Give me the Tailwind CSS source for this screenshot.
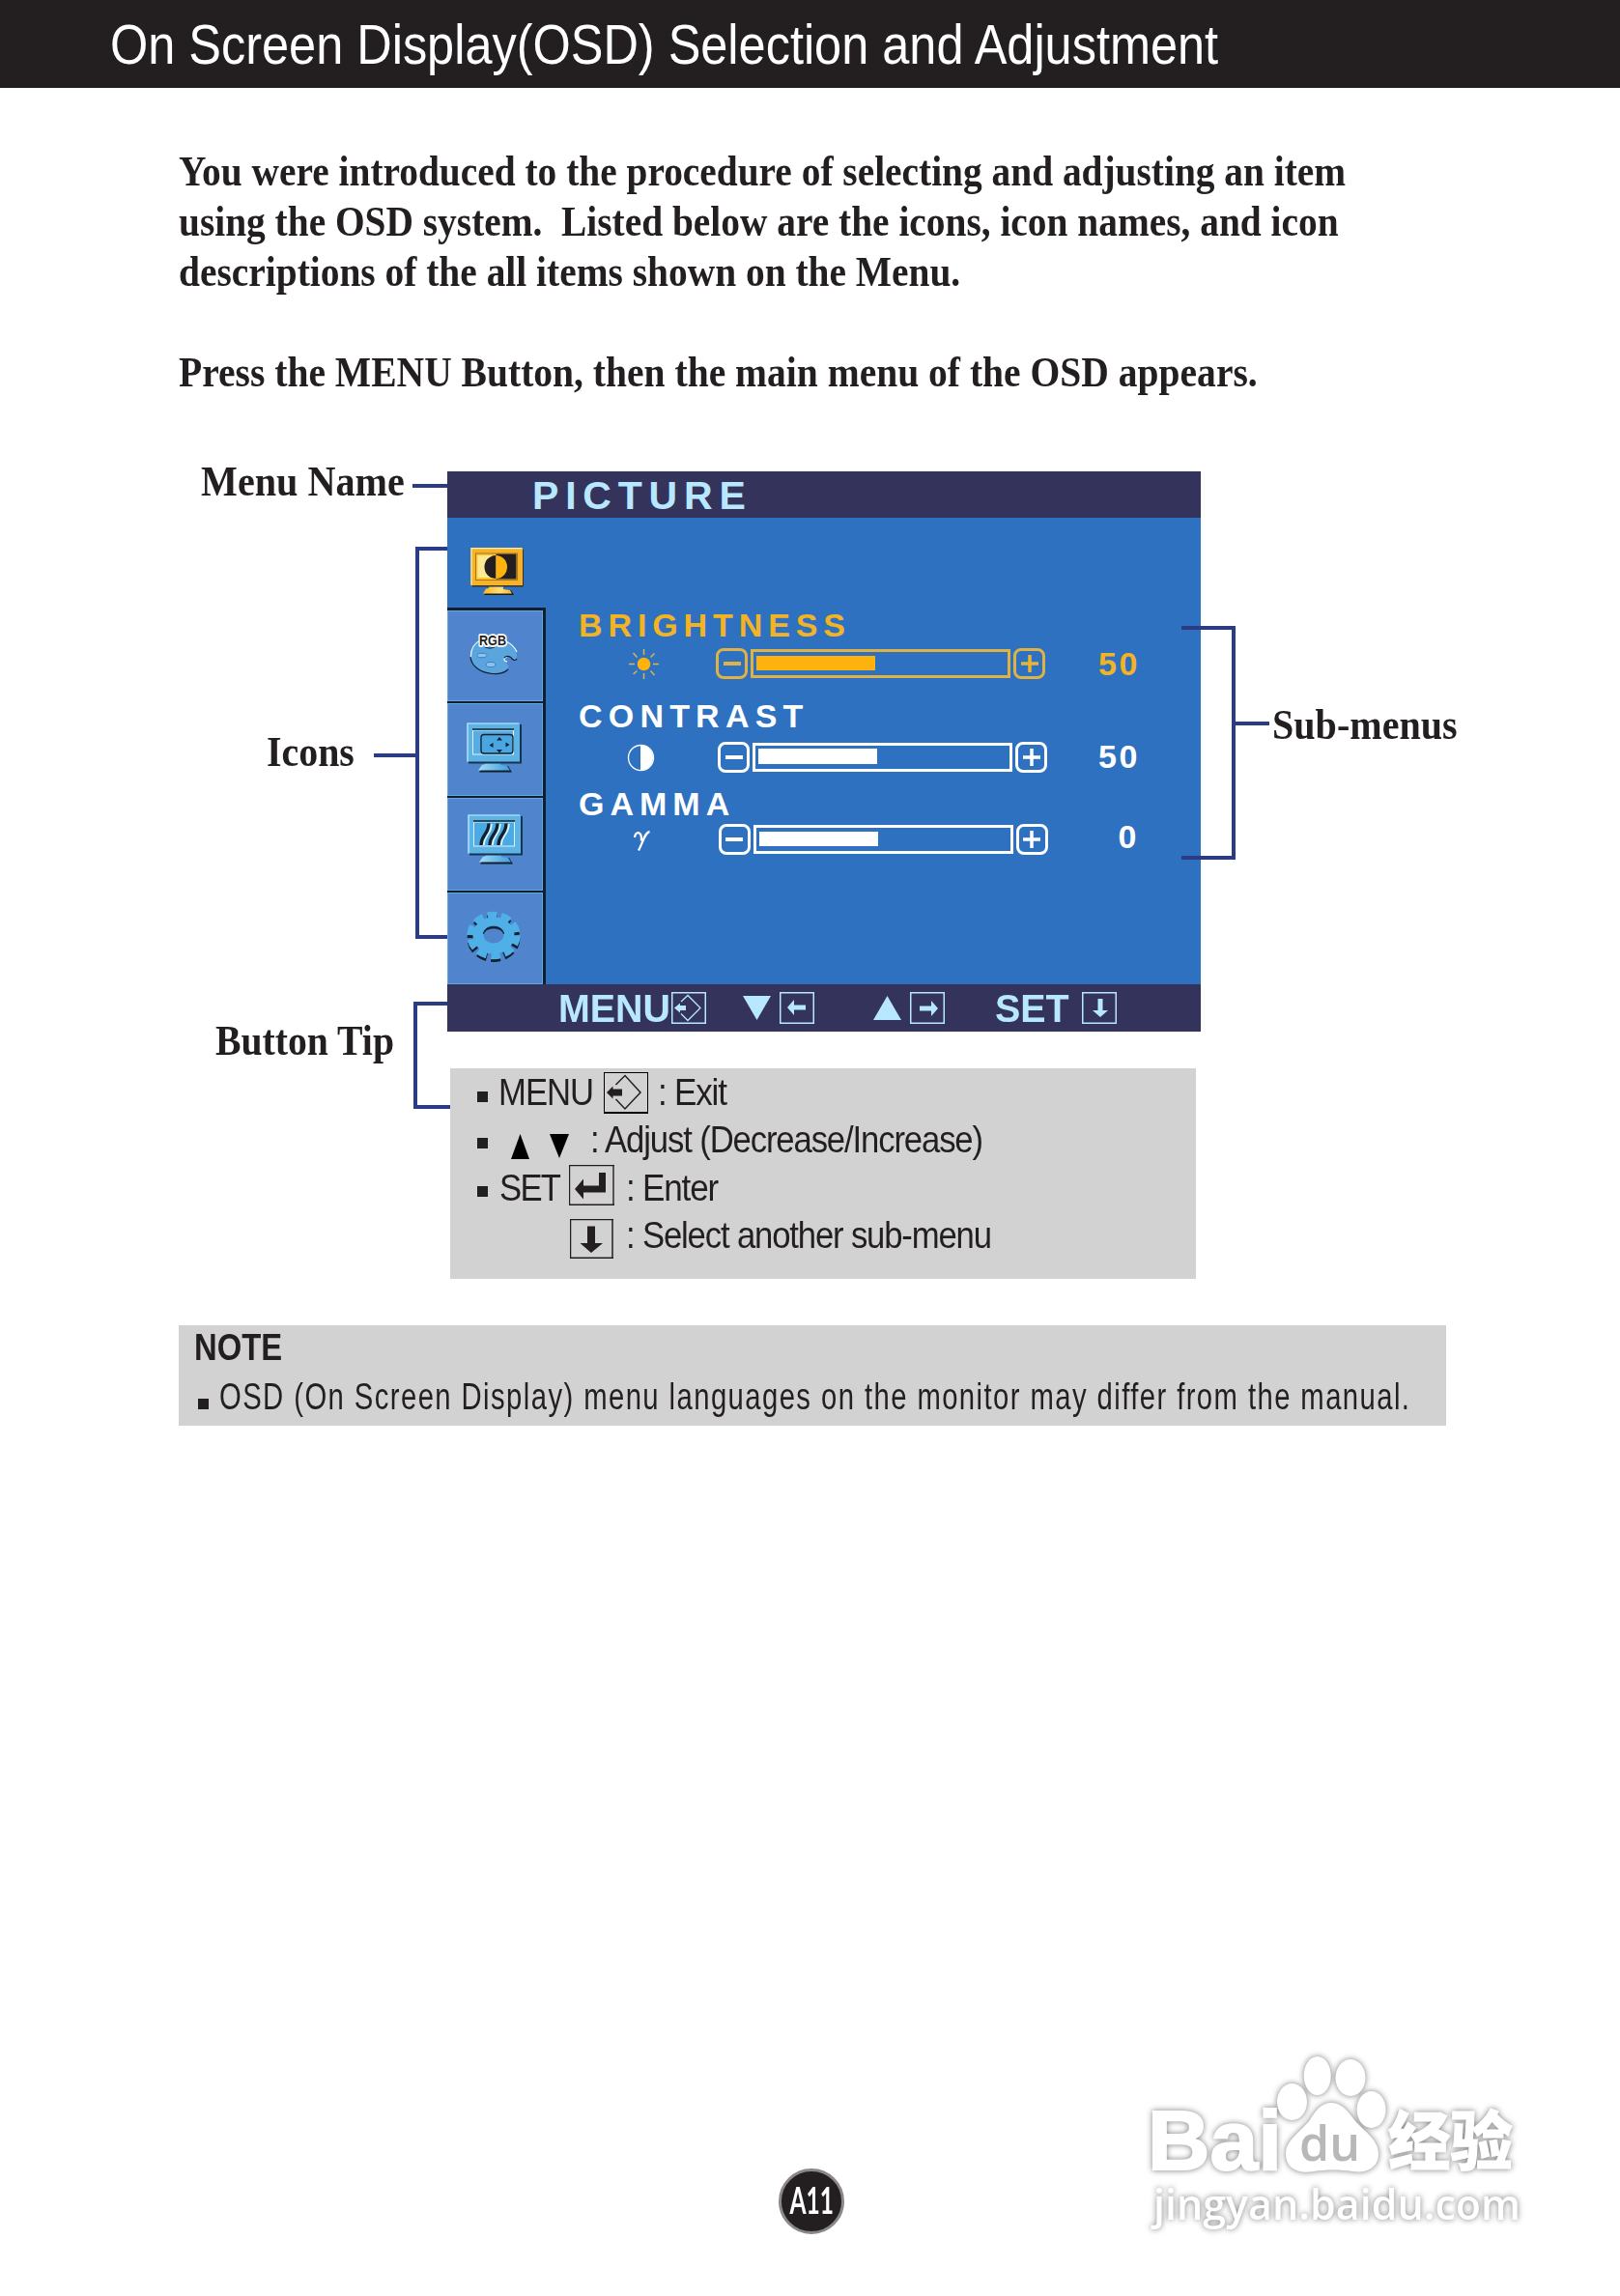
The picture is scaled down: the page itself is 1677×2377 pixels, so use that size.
<!DOCTYPE html>
<html lang="en">

<head>
    <meta charset="UTF-8">
    <meta name="viewport" content="width=device-width, initial-scale=1.0">
    <title>On Screen Display (OSD) Selection and Adjustment</title>
    <script src="https://cdn.jsdelivr.net/npm/@tailwindcss/browser@4"></script>
</head>

<body class="bg-white text-[#231f20] font-['Liberation_Sans',sans-serif]">
    <div class="relative w-[1677px] h-[2377px] overflow-hidden">

        <header class="flex items-center h-[91px] pl-[114px] bg-[#231f20] text-white">
            <h1 class="text-[58px] leading-none whitespace-nowrap origin-left scale-x-[0.87]">On Screen Display(OSD) Selection and Adjustment</h1>
        </header>

        <main class="px-[185px]">
            <!-- Intro -->
            <div class="pt-[60px] font-['Liberation_Serif',serif] font-bold text-[45px] leading-[52px]">
                <p class="whitespace-pre origin-left scale-x-[0.8752]">You were introduced to the procedure of selecting and adjusting an item</p>
                <p class="whitespace-pre origin-left scale-x-[0.8752]">using the OSD system.  Listed below are the icons, icon names, and icon</p>
                <p class="whitespace-pre origin-left scale-x-[0.876]">descriptions of the all items shown on the Menu.</p>
                <p class="mt-[52px] whitespace-pre origin-left scale-x-[0.879]">Press the MENU Button, then the main menu of the OSD appears.</p>
            </div>

            <!-- Annotated OSD menu -->
            <section class="relative flex mt-[64px] h-[849px]">
                <div class="w-[278px] shrink-0 pt-px flex flex-col items-start font-['Liberation_Serif',serif] font-bold text-[45px] leading-none whitespace-nowrap">
                    <p class="ml-[23px] origin-left scale-x-[0.893]">Menu Name</p>
                    <p class="mt-[235px] ml-[91px] origin-left scale-x-[0.886]">Icons</p>
                    <p class="mt-[254px] ml-[38px] origin-left scale-x-[0.882]">Button Tip</p>
                </div>

                <div class="w-[780px] shrink-0 pt-[13px]">
                    <div class="flex items-center h-[48px] pl-[88px] pt-[2px] bg-[#33335b] text-[#b8e8ff]">
                        <span class="text-[41px] font-bold leading-none tracking-[6.8px]">PICTURE</span>
                    </div>

                    <div class="flex h-[483px] bg-[#2d71c0]">
                        <!-- Icon column -->
                        <div class="w-[102px] shrink-0">
                            <div class="h-[93px] pt-[30px] pl-[23px]">
                                <svg class="w-[58px] h-[52px]" viewBox="0 0 58 52">
                                    <defs>
                                        <linearGradient id="stand" x1="0" x2="1">
                                            <stop offset="0" stop-color="#f9b522" />
                                            <stop offset="0.6" stop-color="#fde07c" />
                                            <stop offset="1" stop-color="#f9b522" />
                                        </linearGradient>
                                        <linearGradient id="standBlue" x1="0" x2="1">
                                            <stop offset="0" stop-color="#a5dbf5" />
                                            <stop offset="1" stop-color="#3f9fdc" />
                                        </linearGradient>
                                    </defs>
                                    <path d="M15 50 L19 45 H43 L46 50 Z" fill="#1d1a12" />
                                    <path d="M20 41 H35 V44 L42 45 L44 48.500 H14 L17 43.500 L20 43 Z" fill="url(#stand)" />
                                    <rect x="3" y="3" width="53" height="38.500" fill="#3a3226" />
                                    <rect x="1.500" y="1" width="53.500" height="39" fill="#f4b32a" />
                                    <path d="M2 39.500 V1.700 H54" fill="none" stroke="#ffeaa0" stroke-width="1.300" />
                                    <rect x="6.500" y="7" width="43" height="27.500" fill="#ffc629" stroke="#a87518" />
                                    <rect x="8.500" y="9" width="19" height="23" fill="#fde993" />
                                    <rect x="27.500" y="7.500" width="21" height="26" fill="#231f20" />
                                    <path d="M27 9 A11.500 12 0 0 0 27 33 Z" fill="#231f20" />
                                    <path d="M27.500 9 A11.500 12 0 0 1 27.500 33 Z" fill="#fdb20e" />
                                </svg>
                            </div>
                            <div class="border-r-[3px] border-[#10202e]">
                                <div class="h-[97px] border-t-[3px] border-[#10202e]">
                                    <div class="h-full border border-[#68a6dc] bg-[#5085cd] pt-[21px] pl-[20px]">
                                        <svg class="w-[54px] h-[46px]" viewBox="0 0 54 46">
                                            <path d="M26 8 C40 7 51 14 51 25 C51 29 47 31 46 28 C44 25 39 26 37 29 C37 32 43 32 42 37 C39 42 32 43.500 26 43 C13 43 3 35 3 25 C3 15 12 8 26 8 Z" fill="#5aa5de" />
                                            <path d="M3.500 27 C3 18 7 12 13 9 M40 10 C46 13 49 16 51 21 M41 31 C36 30 38 27 41 26" fill="none" stroke="#e4f4ff" stroke-width="1.300" />
                                            <path d="M3 26 C4 36 14 43 26 43.500 C33 44 39 42 42 39 M38 27 C41 24 45 26 46 28 C48 30 50 30 51 28" fill="none" stroke="#10202e" stroke-width="1.200" />
                                            <ellipse cx="15" cy="24.500" rx="5" ry="2.200" fill="#8cc4ee" stroke="#356fb5" stroke-width="0.800" />
                                            <ellipse cx="24" cy="34" rx="5" ry="2.500" fill="#8cc4ee" stroke="#356fb5" stroke-width="0.800" />
                                            <path d="M18 16 Q23 18.500 28 16" fill="none" stroke="#10202e" />
                                            <text x="12" y="13.500" textLength="28" lengthAdjust="spacingAndGlyphs" font-family="Liberation Sans" font-weight="bold" font-size="15" fill="#231f20" stroke="#fff" stroke-width="3.500" stroke-linejoin="round" paint-order="stroke">RGB</text>
                                        </svg>
                                    </div>
                                </div>
                                <div class="h-[98px] border-t-2 border-[#10202e]">
                                    <div class="h-full border border-[#68a6dc] bg-[#5085cd] pt-[18px] pl-[18px]">
                                        <svg class="w-[60px] h-[54px]" viewBox="0 0 60 54">
                                            <path d="M14 52.500 L18 46 H44 L48 52.500 Z" fill="#10202e" />
                                            <path d="M20 42 H36 V45 L43 46 L46 50.500 H13 L17 45 L20 44 Z" fill="url(#standBlue)" />
                                            <rect x="3" y="3" width="55" height="40.500" fill="#143452" />
                                            <rect x="1.500" y="1.500" width="54.500" height="40" fill="#5cb3e4" />
                                            <path d="M2 41.500 V2 H55" fill="none" stroke="#c3ebff" stroke-width="1.200" />
                                            <rect x="7.500" y="9" width="42" height="25" fill="#58ace2" stroke="#d9f2ff" />
                                            <path d="M7 8 H50" stroke="#10202e" stroke-width="1.300" />
                                            <rect x="16" y="13.500" width="33" height="19.500" rx="3" fill="#4aa6e0" stroke="#10202e" stroke-width="1.300" />
                                            <path d="M24.500 24.500 l4 -2.500 v5 z M45.500 24 l-4 -2.500 v5 z M35 16 l3 3.500 h-6 z M35 32.500 l3 -3.500 h-6 z" fill="#10202e" />
                                        </svg>
                                    </div>
                                </div>
                                <div class="h-[98px] border-t-2 border-[#10202e]">
                                    <div class="h-full border border-[#68a6dc] bg-[#5085cd] pt-[15px] pl-[19px]">
                                        <svg class="w-[60px] h-[54px]" viewBox="0 0 60 54">
                                            <path d="M14 52.500 L18 46 H44 L48 52.500 Z" fill="#10202e" />
                                            <path d="M20 42 H36 V45 L43 46 L46 50.500 H13 L17 45 L20 44 Z" fill="url(#standBlue)" />
                                            <rect x="3" y="3" width="55" height="40.500" fill="#143452" />
                                            <rect x="1.500" y="1.500" width="54.500" height="40" fill="#5cb3e4" />
                                            <path d="M2 41.500 V2 H55" fill="none" stroke="#c3ebff" stroke-width="1.200" />
                                            <rect x="7.500" y="9" width="42" height="25" fill="#4aaae4" stroke="#d9f2ff" />
                                            <path d="M7 8 H50" stroke="#10202e" stroke-width="1.300" />
                                            <path d="M17 33 C17 22 25 22 25 11 M26 33 C26 22 34 22 34 11 M35 33 C35 22 43 22 43 11" fill="none" stroke="#d9f2ff" stroke-width="3.500" />
                                            <path d="M15 33 C15 22 23 22 23 10.500 M24 33 C24 22 32 22 32 10.500 M33 33 C33 22 41 22 41 10.500" fill="none" stroke="#10202e" stroke-width="3.300" />
                                        </svg>
                                    </div>
                                </div>
                                <div class="h-[97px] border-t-2 border-[#10202e]">
                                    <div class="h-full border border-[#68a6dc] bg-[#5085cd] pt-[17px] pl-[18px]">
                                        <svg class="w-[60px] h-[56px]" viewBox="0 0 60 56">
                                            <g fill="none">
                                                <ellipse cx="29" cy="29.500" rx="23.500" ry="20.500" stroke="#10202e" stroke-width="8" stroke-dasharray="9.400 4.450" />
                                                <ellipse cx="29" cy="26.500" rx="23.500" ry="20.500" stroke="#4fb0e8" stroke-width="8.500" stroke-dasharray="9.400 4.450" />
                                                <ellipse cx="29" cy="26.500" rx="16" ry="13.500" stroke="#4fb0e8" stroke-width="11" />
                                                <path d="M18.500 25 C19 14.500 39 14.500 39.500 25 C37 17 21 17 18.500 25 Z" fill="#10202e" stroke="#10202e" stroke-width="0.800" />
                                            </g>
                                        </svg>
                                    </div>
                                </div>
                            </div>
                        </div>

                        <!-- Sub-menu settings -->
                        <div class="flex-1 pt-[94px] pl-[34px] font-bold text-[34px] leading-none text-white">
                            <div class="text-[#f2b325]">
                                <p class="h-[34px] tracking-[5.9px]">BRIGHTNESS</p>
                                <div class="flex items-center h-[32px] mt-[7px] pl-[51px]">
                                    <svg class="w-[33px] h-[33px]" viewBox="-16.500 -16.500 33 33">
                                        <circle r="6.800" fill="#fdb20e" />
                                        <path d="M0 -15.500V-9.500M0 15.500V9.500M-15.500 0H-9.500M15.500 0H9.500M-11 -11.500L-7 -7M11 -11L7 -7M-11 10.500L-7 7M11 11.500L7 7" stroke="#e0b34a" stroke-width="1.500" />
                                    </svg>
                                    <span class="ml-[58px] w-[33px] h-[32px] border-[3px] border-[#deb244] rounded-[8px] flex items-center justify-center"><i class="w-[18px] h-[4px] bg-[#deb244]"></i></span>
                                    <span class="ml-[3px] w-[269px] h-[30px] border-[3.5px] border-[#deb244] pl-[3px] pt-[4px]"><i class="block w-[123px] h-[15px] bg-[#fdb20e]"></i></span>
                                    <span class="ml-[3px] w-[33px] h-[32px] border-[3px] border-[#deb244] rounded-[8px] flex items-center justify-center">
                                        <svg class="w-[18px] h-[18px]" viewBox="0 0 18 18"><path d="M9 0V18M0 9H18" stroke="#e8b433" stroke-width="3.500" /></svg>
                                    </span>
                                    <span class="ml-[55px] w-[44px] tracking-[2.5px]">50</span>
                                </div>
                            </div>
                            <div class="mt-[21px]">
                                <p class="h-[34px] tracking-[6.2px]">CONTRAST</p>
                                <div class="flex items-center h-[32px] mt-[10px] pl-[48px]">
                                    <svg class="w-[33px] h-[33px]" viewBox="-16.500 -16.500 33 33">
                                        <circle r="13" fill="none" stroke="#fff" stroke-width="1.300" />
                                        <path d="M-0.500 -13A13 13 0 0 1 -0.500 13Z" fill="#fff" />
                                    </svg>
                                    <span class="ml-[63px] w-[33px] h-[32px] border-[3px] rounded-[8px] flex items-center justify-center"><i class="w-[18px] h-[4px] bg-white"></i></span>
                                    <span class="ml-[3px] w-[269px] h-[30px] border-[3.5px] pl-[3px] pt-[3px]"><i class="block w-[123px] h-[16px] bg-white"></i></span>
                                    <span class="ml-[3px] w-[33px] h-[32px] border-[3px] rounded-[8px] flex items-center justify-center">
                                        <svg class="w-[18px] h-[18px]" viewBox="0 0 18 18"><path d="M9 0V18M0 9H18" stroke="#fff" stroke-width="3.500" /></svg>
                                    </span>
                                    <span class="ml-[53px] mb-[3px] w-[44px] tracking-[2.5px]">50</span>
                                </div>
                            </div>
                            <div class="mt-[15px]">
                                <p class="h-[34px] tracking-[6px]">GAMMA</p>
                                <div class="flex items-center h-[32px] mt-[4px] pl-[50px]">
                                    <svg class="w-[33px] h-[33px]" viewBox="-16.500 -16.500 33 33">
                                        <path d="M-8.500 -2.500C-8 -9 -1 -10 -1.500 1M7 -8.500C2 -8 0 3 -4.500 11" fill="none" stroke="#fff" stroke-width="2.300" />
                                    </svg>
                                    <span class="ml-[61.5px] w-[33px] h-[32px] border-[3px] rounded-[8px] flex items-center justify-center"><i class="w-[18px] h-[4px] bg-white"></i></span>
                                    <span class="ml-[3px] w-[269px] h-[30px] border-[3.5px] pl-[3px] pt-[4px]"><i class="block w-[123px] h-[15px] bg-white"></i></span>
                                    <span class="ml-[3px] w-[33px] h-[32px] border-[3px] rounded-[8px] flex items-center justify-center">
                                        <svg class="w-[18px] h-[18px]" viewBox="0 0 18 18"><path d="M9 0V18M0 9H18" stroke="#fff" stroke-width="3.500" /></svg>
                                    </span>
                                    <span class="ml-[73px] mb-[7px]">0</span>
                                </div>
                            </div>
                        </div>
                    </div>

                    <!-- Button bar -->
                    <div class="flex items-center h-[49px] pl-[115px] bg-[#33335b] text-[#b8e8ff] font-bold text-[40px] leading-none whitespace-nowrap">
                        <span class="w-[117px] origin-left scale-x-[0.985]">MENU</span>
                        <svg class="w-[36px] h-[33px]" viewBox="0 0 36 33" fill="none" stroke="#b8e8ff">
                            <rect x="0.750" y="0.750" width="34.500" height="31.500" stroke-width="1.500" />
                            <path d="M10 10L17 3.500L30 16.500L17 29.500L10 22.500" stroke-width="1.300" />
                            <path d="M3 16.500L9 11.500V14H15V19H9V21.500Z" fill="#b8e8ff" stroke="none" />
                        </svg>
                        <svg class="ml-[38px] w-[29px] h-[25px]" viewBox="0 0 29 25"><path d="M0 0H29L14.500 25Z" fill="#b8e8ff" /></svg>
                        <svg class="ml-[9px] w-[36px] h-[33px]" viewBox="0 0 36 33">
                            <rect x="0.750" y="0.750" width="34.500" height="31.500" fill="none" stroke="#b8e8ff" stroke-width="1.500" />
                            <path d="M8 16L15 8V13.500H27V18.500H15V24Z" fill="#b8e8ff" />
                        </svg>
                        <svg class="ml-[61px] w-[29px] h-[25px]" viewBox="0 0 29 25"><path d="M0 25H29L14.500 0Z" fill="#b8e8ff" /></svg>
                        <svg class="ml-[9px] w-[36px] h-[33px]" viewBox="0 0 36 33">
                            <rect x="0.750" y="0.750" width="34.500" height="31.500" fill="none" stroke="#b8e8ff" stroke-width="1.500" />
                            <path d="M29 17L22 9V14.500H10V19.500H22V25Z" fill="#b8e8ff" />
                        </svg>
                        <span class="ml-[52px] w-[90px] origin-left scale-x-[0.985]">SET</span>
                        <svg class="w-[36px] h-[33px]" viewBox="0 0 36 33">
                            <rect x="0.750" y="0.750" width="34.500" height="31.500" fill="none" stroke="#b8e8ff" stroke-width="1.500" />
                            <path d="M19 26L11 19H16.500V7H21.500V19H27Z" fill="#b8e8ff" />
                        </svg>
                    </div>

                    <!-- Button legend -->
                    <div class="mt-[38px] ml-[3px] w-[772px] h-[218px] bg-[#d2d2d2] text-[38.5px] leading-none whitespace-nowrap">
                        <div class="flex items-center h-[49.3px] pl-[28px]">
                            <i class="w-[11px] h-[11px] mt-[9px] bg-[#231f20]"></i>
                            <span class="mt-[2px] ml-[11px] w-[109px] origin-left scale-x-90 tracking-[-1.07px]">MENU</span>
                            <svg class="mt-[2px] w-[46px] h-[43px]" viewBox="0 0 46 43" fill="none" stroke="#000">
                                <path d="M0.500 0V43M45.500 0V43M0 0.500H46" />
                                <path d="M0 42H46" stroke-width="2" />
                                <path d="M12.500 13L22 3.500L38 21L22 38L12.500 28" stroke="#231f20" stroke-width="1.500" />
                                <path d="M3 21L9.500 14.500V17.500H19V24.500H9.500V27.500Z" fill="#231f20" stroke="none" />
                            </svg>
                            <span class="mt-[2px] ml-[10px] origin-left scale-x-[0.91] tracking-[-1.3px]">: Exit</span>
                        </div>
                        <div class="flex items-center h-[49.3px] pl-[28px]">
                            <i class="w-[11px] h-[11px] mt-[8px] bg-[#231f20]"></i>
                            <svg class="mt-[14px] ml-[24px] w-[19px] h-[26px]" viewBox="0 0 19 26"><path d="M0 26H19L9.500 0Z" /></svg>
                            <svg class="mt-[13px] ml-[21px] w-[20px] h-[25px]" viewBox="0 0 20 25"><path d="M0 0H20L10 25Z" /></svg>
                            <span class="mt-px ml-[22px] origin-left scale-x-90 tracking-[-1.24px]">: Adjust (Decrease/Increase)</span>
                        </div>
                        <div class="flex items-center h-[49.3px] pl-[28px]">
                            <i class="w-[11px] h-[11px] mt-[8px] bg-[#231f20]"></i>
                            <span class="mt-[2px] ml-[12px] w-[72px] origin-left scale-x-90 tracking-[-1.9px]">SET</span>
                            <svg class="mb-[4px] w-[47px] h-[42px]" viewBox="0 0 47 42">
                                <path d="M0.500 0V42M0 0.500H47M46 0V42M0 41.300H47" fill="none" stroke="#231f20" stroke-width="1.400" />
                                <path d="M6 25L15 14.500V21.500H31V8H38V28.500H15V35.500Z" fill="#231f20" />
                            </svg>
                            <span class="mt-[2px] ml-[12px] origin-left scale-x-[0.91] tracking-[-1.3px]">: Enter</span>
                        </div>
                        <div class="flex items-center h-[49.3px] pl-[124px]">
                            <svg class="mt-[8px] w-[45px] h-[41px]" viewBox="0 0 45 41">
                                <path d="M0.500 0V41M0 0.500H45M44 0V41M0 40.200H45" fill="none" stroke="#231f20" stroke-width="1.500" />
                                <path d="M22 35L10.500 25H18V7.500H26V25H34Z" fill="#231f20" />
                            </svg>
                            <span class="mt-px ml-[13px] origin-left scale-x-90 tracking-[-1.27px]">: Select another sub-menu</span>
                        </div>
                    </div>
                </div>

                <div class="pt-[253px] pl-[74px] font-['Liberation_Serif',serif] font-bold text-[45px] leading-none whitespace-nowrap">
                    <p class="origin-left scale-x-[0.891]">Sub-menus</p>
                </div>

                <!-- Callout lines -->
                <svg class="absolute left-0 top-0 w-[1307px] h-[849px]" viewBox="185 475 1307 849" fill="none" stroke="#2b3c85" stroke-width="4">
                    <path d="M427 503H463" />
                    <path d="M463 568H432V970H463M387 782H432" />
                    <path d="M463 1039H430V1146H466" />
                    <path d="M1223 650H1277V888H1223M1277 749H1314" />
                </svg>
            </section>

            <!-- Note -->
            <section class="mt-[48px] w-[1312px] h-[104px] bg-[#d2d2d2] whitespace-nowrap">
                <h2 class="pt-[4px] ml-[16px] text-[38px] leading-none font-bold origin-left scale-x-[0.863]">NOTE</h2>
                <div class="flex items-center mt-[12px] pl-[20px]">
                    <i class="w-[11px] h-[11px] mt-[15px] shrink-0 bg-[#231f20]"></i>
                    <p class="ml-[11px] text-[39px] leading-none origin-left scale-x-75 tracking-[1.9px]">OSD (On Screen Display) menu languages on the monitor may differ from the manual.</p>
                </div>
            </section>
        </main>

        <!-- Page number -->
        <div class="absolute left-[806px] top-[2245px] w-[68px] h-[68px] rounded-full border-[3px] border-[#8a8889] bg-[#231f20] text-white flex items-center justify-center">
            <span class="mb-[4px] font-['Lato',sans-serif] font-bold text-[39px] leading-none scale-x-[0.63]">A11</span>
        </div>

        <!-- Watermark -->
        <svg class="absolute left-[1180px] top-[2115px] w-[410px] h-[210px] drop-shadow-[0_0_3px_#7a7a7a]" viewBox="1180 2115 410 210" fill="#fff">
            <ellipse cx="1337.500" cy="2176" rx="15.500" ry="19" />
            <ellipse cx="1363.700" cy="2149" rx="14" ry="20" />
            <ellipse cx="1398" cy="2151" rx="15.500" ry="19" />
            <ellipse cx="1419.600" cy="2184" rx="15" ry="19" />
            <path d="M1378 2177C1388 2177 1394 2184 1400 2192C1408 2204 1428 2214 1427 2231C1426 2246 1412 2250 1400 2248C1388 2246 1372 2246 1360 2248C1344 2251 1331 2245 1331 2230C1331 2214 1349 2206 1357 2193C1362 2185 1368 2177 1378 2177Z" />
            <text x="1188" y="2246" textLength="139" lengthAdjust="spacingAndGlyphs" font-family="Liberation Sans" font-weight="bold" font-size="88" stroke="#fff" stroke-width="2">Bai</text>
            <text x="1345" y="2237" textLength="63" lengthAdjust="spacingAndGlyphs" font-family="Open Sans" font-weight="600" font-size="50" fill="#b8b8b8">du</text>
            <text x="1437" y="2241" textLength="129" lengthAdjust="spacingAndGlyphs" font-family="Noto Sans CJK SC" font-weight="900" font-size="66" stroke="#fff" stroke-width="1">经验</text>
            <text x="1194" y="2298" textLength="380" lengthAdjust="spacingAndGlyphs" font-family="Open Sans" font-weight="600" font-size="43">jingyan.baidu.com</text>
        </svg>
    </div>
</body>

</html>
